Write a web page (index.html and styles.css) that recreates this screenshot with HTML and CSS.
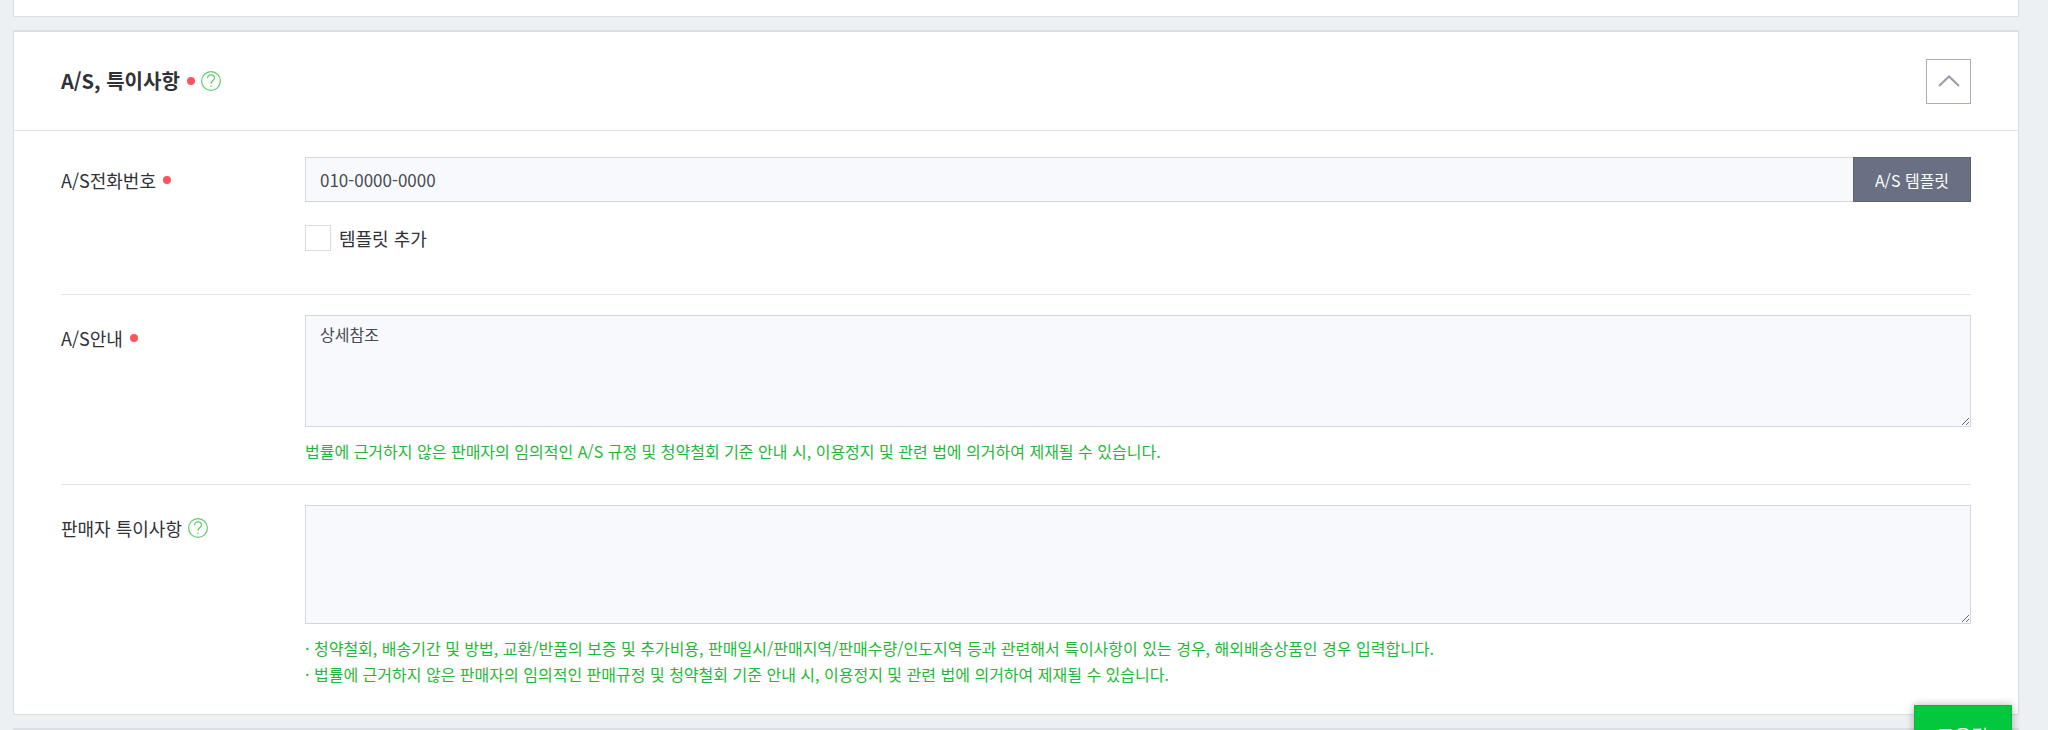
FILE: index.html
```html
<!DOCTYPE html>
<html lang="ko">

<head>
  <meta charset="utf-8">
  <title>A/S, 특이사항</title>
  <meta name="viewport" content="width=device-width, initial-scale=1.0">
  <link rel="stylesheet" href="styles.css">
</head>

<body>
  <div class="panel panel-prev"></div>

  <form class="panel" onsubmit="return false;">
    <div class="panel-head">
      <h1 class="title">A/S, 특이사항</h1>
      <span class="required"></span>
      <button type="button" class="help" aria-label="도움말">
        <svg viewBox="0 0 20 20" width="20" height="20">
          <circle cx="10" cy="10" r="9.4" />
          <path d="M6.6 7.2C6.6 5 8 3.8 10 3.8s3.5 1.2 3.5 3.1c0 2.5-3.5 2.7-3.5 5.9M10 14.6v1.3" />
        </svg>
      </button>
      <button type="button" class="fold" aria-label="접기">
        <svg viewBox="0 0 22 12" width="22" height="12">
          <path d="M1 11L11 1.5 21 11" />
        </svg>
      </button>
    </div>

    <div class="panel-body">
      <div class="row row-phone">
        <div class="name">
          <label for="as_phone">A/S전화번호</label>
          <span class="required"></span>
        </div>
        <div class="field">
          <div class="input-group">
            <input type="text" class="text" name="as_phone" id="as_phone" value="010-0000-0000">
            <button type="button" class="template">A/S 템플릿</button>
          </div>
          <div class="check">
            <input type="checkbox" name="template_add" id="template_add">
            <label for="template_add">템플릿 추가</label>
          </div>
        </div>
      </div>

      <div class="row">
        <div class="name">
          <label for="as_guide">A/S안내</label>
          <span class="required"></span>
        </div>
        <div class="field">
          <textarea class="text area" name="as_guide" id="as_guide">상세참조</textarea>
          <p class="hint">법률에 근거하지 않은 판매자의 임의적인 A/S 규정 및 청약철회 기준 안내 시, 이용정지 및 관련 법에 의거하여 제재될 수 있습니다.</p>
        </div>
      </div>

      <div class="row">
        <div class="name">
          <label for="seller_note">판매자 특이사항</label>
          <button type="button" class="help" aria-label="도움말">
            <svg viewBox="0 0 20 20" width="20" height="20">
              <circle cx="10" cy="10" r="9.4" />
              <path d="M6.6 7.2C6.6 5 8 3.8 10 3.8s3.5 1.2 3.5 3.1c0 2.5-3.5 2.7-3.5 5.9M10 14.6v1.3" />
            </svg>
          </button>
        </div>
        <div class="field">
          <textarea class="text area area-tall" name="seller_note" id="seller_note"></textarea>
          <p class="hint">· 청약철회, 배송기간 및 방법, 교환/반품의 보증 및 추가비용, 판매일시/판매지역/판매수량/인도지역 등과 관련해서 특이사항이 있는 경우, 해외배송상품인 경우 입력합니다.<br>
            · 법률에 근거하지 않은 판매자의 임의적인 판매규정 및 청약철회 기준 안내 시, 이용정지 및 관련 법에 의거하여 제재될 수 있습니다.</p>
        </div>
      </div>
    </div>
  </form>

  <div class="panel panel-next"></div>

  <button type="button" class="float-help">도움말</button>
</body>

</html>
```

FILE: styles.css
```css
* {
  box-sizing: border-box;
}

body {
  height: 100vh;
  margin: 0;
  padding: 0 29px 0 13px;
  overflow: hidden;
  display: flex;
  flex-direction: column;
  gap: 13px;
  background-color: #edf0f3;
  color: #303238;
  font-family: "Noto Sans CJK KR", sans-serif;
  font-size: 18px;
  line-height: 26px;
}

button,
input,
textarea {
  font-family: inherit;
}

button {
  cursor: pointer;
}

svg {
  display: block;
  fill: none;
}

.panel {
  flex-shrink: 0;
  background-color: white;
  border: 1px solid #dadde1;
  border-top: 2px solid #dcdfe3;
}

.panel-prev {
  height: 17px;
  border-top: 0;
}

.panel-next {
  height: 60px;
}

.panel-head {
  display: flex;
  align-items: center;
  height: 99px;
  padding: 0 47px;
  border-bottom: 1px solid #dfe2e5;
}

.title {
  margin: 0;
  font-size: 20px;
  font-weight: 700;
}

.required {
  width: 8px;
  height: 8px;
  margin-left: 7px;
  border-radius: 50%;
  background-color: #ff535d;
}

.help {
  margin-left: 6px;
  padding: 0;
  border: 0;
  background: none;
}

.help svg {
  stroke: #5fcc6c;
  stroke-width: 1.2;
}

.fold {
  display: flex;
  align-items: center;
  justify-content: center;
  width: 45px;
  height: 45px;
  margin-left: auto;
  padding: 0;
  border: 1px solid #a9acb2;
  background-color: white;
}

.fold svg {
  stroke: #989ca8;
  stroke-width: 2;
}

.panel-body {
  padding: 0 47px 7px;
}

.row {
  display: flex;
  padding: 20px 0;
  border-bottom: 1px solid #e3e5e8;
}

.row:last-child {
  border-bottom: 0;
}

.row-phone {
  padding: 26px 0 43px;
}

.name {
  display: flex;
  align-items: center;
  flex: 0 0 244px;
  height: 45px;
}

.field {
  flex: 1;
  min-width: 0;
}

.input-group {
  display: flex;
}

.text {
  display: block;
  width: 100%;
  padding: 0 14px;
  border: 1px solid #d3d6da;
  border-radius: 0;
  outline: 0;
  background-color: #f8f9fd;
  color: #484b52;
  font-size: 16px;
}

input.text {
  flex: 1;
  height: 45px;
  border-right: 0;
  font-size: 17px;
}

.template {
  width: 118px;
  height: 45px;
  padding: 0;
  border: 1px solid #5c6175;
  background-color: #697083;
  color: white;
  font-size: 16px;
}

.check {
  display: flex;
  align-items: center;
  gap: 8px;
  margin-top: 23px;
}

.check input {
  appearance: none;
  width: 26px;
  height: 26px;
  margin: 0;
  border: 1px solid #d8dbdf;
  background-color: white;
}

.check input:checked {
  background-color: #03c73c;
}

.area {
  height: 112px;
  padding: 5px 14px;
  line-height: 26px;
  resize: vertical;
}

.area-tall {
  height: 119px;
}

.hint {
  margin: 11px 0 0;
  color: #1fb838;
  font-size: 16px;
}

/* stays over the page, partly below the fold */
.float-help {
  position: fixed;
  right: 36px;
  bottom: -35px;
  width: 98px;
  height: 60px;
  border: 1px solid #0ab53a;
  background-color: #03c73c;
  box-shadow: 0 0 8px rgba(0, 0, 0, 0.3);
  color: white;
  font-size: 19px;
}
```
